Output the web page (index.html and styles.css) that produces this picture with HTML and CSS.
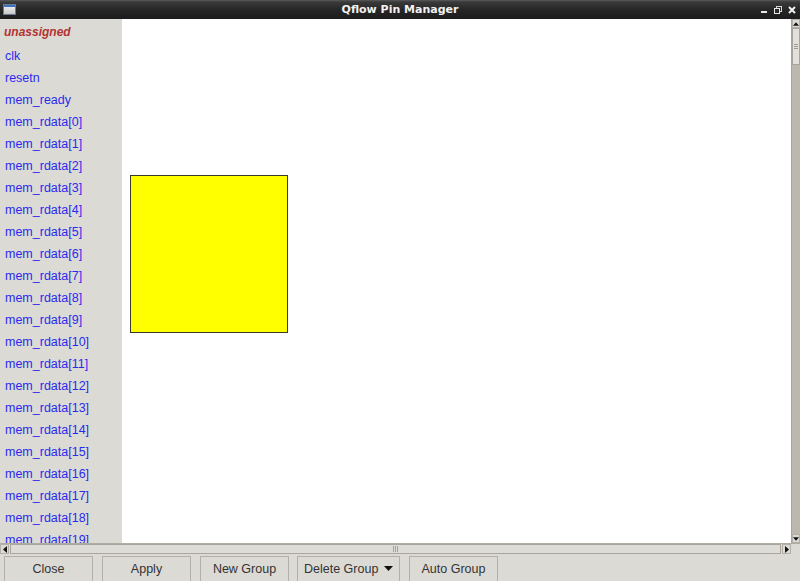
FILE: index.html
```html
<!DOCTYPE html>
<html>
<head>
<meta charset="utf-8">
<link rel="stylesheet" href="styles.css">
</head>
<body>
<div class="window">
  <div class="titlebar">
    <div class="appicon"><div class="appicon-top"></div></div>
    <div class="title">Qflow Pin Manager</div>
    <div class="wm-buttons">
      <svg width="8" height="8" viewBox="0 0 8 8"><rect x="1" y="5" width="6" height="2" fill="#e8e8e8"/></svg>
      <svg width="8" height="8" viewBox="0 0 8 8"><rect x="2.5" y="0.5" width="5" height="5" fill="none" stroke="#d8d8d8"/><rect x="0.5" y="2.5" width="5" height="5" fill="#2a2a2a" stroke="#e8e8e8"/></svg>
      <svg width="8" height="8" viewBox="0 0 8 8"><path d="M1 1 L7 7 M7 1 L1 7" stroke="#f0f0f0" stroke-width="2"/></svg>
    </div>
  </div>
  <div class="main">
    <div class="pinlist">
      <div class="pin group">unassigned</div>
      <div class="pin">clk</div>
      <div class="pin">resetn</div>
      <div class="pin">mem_ready</div>
      <div class="pin">mem_rdata[0]</div>
      <div class="pin">mem_rdata[1]</div>
      <div class="pin">mem_rdata[2]</div>
      <div class="pin">mem_rdata[3]</div>
      <div class="pin">mem_rdata[4]</div>
      <div class="pin">mem_rdata[5]</div>
      <div class="pin">mem_rdata[6]</div>
      <div class="pin">mem_rdata[7]</div>
      <div class="pin">mem_rdata[8]</div>
      <div class="pin">mem_rdata[9]</div>
      <div class="pin">mem_rdata[10]</div>
      <div class="pin">mem_rdata[11]</div>
      <div class="pin">mem_rdata[12]</div>
      <div class="pin">mem_rdata[13]</div>
      <div class="pin">mem_rdata[14]</div>
      <div class="pin">mem_rdata[15]</div>
      <div class="pin">mem_rdata[16]</div>
      <div class="pin">mem_rdata[17]</div>
      <div class="pin">mem_rdata[18]</div>
      <div class="pin">mem_rdata[19]</div>
    </div>
    <div class="canvas">
      <div class="chip"></div>
    </div>
    <div class="vscroll">
      <div class="arrow up"><svg width="7" height="4" viewBox="0 0 7 4"><path d="M0 4 L3.5 0 L7 4 Z" fill="#111"/></svg></div>
      <div class="vthumb"><div class="grip-h"></div><div class="grip-h"></div><div class="grip-h"></div></div>
      <div class="vtrough"></div>
      <div class="arrow down"><svg width="7" height="4" viewBox="0 0 7 4"><path d="M0 0 L3.5 4 L7 0 Z" fill="#111"/></svg></div>
    </div>
  </div>
  <div class="hrow">
    <div class="hscroll">
      <div class="harrow"><svg width="4" height="7" viewBox="0 0 4 7"><path d="M4 0 L0 3.5 L4 7 Z" fill="#111"/></svg></div>
      <div class="hthumb"><div class="grip-v"></div><div class="grip-v"></div><div class="grip-v"></div></div>
      <div class="harrow"><svg width="4" height="7" viewBox="0 0 4 7"><path d="M0 0 L4 3.5 L0 7 Z" fill="#111"/></svg></div>
    </div>
    <div class="corner"></div>
  </div>
  <div class="buttons">
    <div class="btn">Close</div>
    <div class="btn">Apply</div>
    <div class="btn">New Group</div>
    <div class="btn menubtn"><span>Delete Group</span><svg width="9" height="5" viewBox="0 0 9 5"><path d="M0 0 L9 0 L4.5 5 Z" fill="#111"/></svg></div>
    <div class="btn">Auto Group</div>
  </div>
</div>
</body>
</html>
```
FILE: styles.css
```css
html, body {
  margin: 0;
  padding: 0;
  background: #dcdad5;
}
.window {
  width: 800px;
  height: 581px;
  display: flex;
  flex-direction: column;
  overflow: hidden;
  font-family: "Liberation Sans", Arial, sans-serif;
}
.titlebar {
  height: 19px;
  flex: none;
  display: flex;
  align-items: center;
  background: linear-gradient(#5a5a5a 0px, #3a3a3a 2px, #262626 10px, #1c1c1c 19px);
}
.appicon {
  width: 13px;
  height: 11px;
  margin-left: 3px;
  background: linear-gradient(#f4f4f4, #c8c8c8);
  border: 1px solid #6a7a90;
  box-sizing: border-box;
}
.appicon-top {
  height: 2px;
  background: #3f6fc0;
}
.title {
  flex: 1;
  text-align: center;
  color: #f2f2f2;
  font-family: "DejaVu Sans", sans-serif;
  font-weight: bold;
  font-size: 11px;
  margin-right: -24px;
}
.wm-buttons {
  display: flex;
  gap: 6px;
  margin-right: 4px;
  align-items: center;
}
.main {
  height: 524px;
  flex: none;
  display: flex;
}
.pinlist {
  width: 122px;
  flex: none;
  background: #dcdad5;
  overflow: hidden;
  padding-top: 1px;
  box-sizing: border-box;
}
.pin {
  height: 22px;
  line-height: 22px;
  padding-left: 5px;
  font-size: 12.5px;
  color: #2a2aee;
  white-space: nowrap;
}
.pin.group {
  height: 25px;
  line-height: 24px;
  padding-left: 4px;
  font-size: 12px;
  font-weight: bold;
  font-style: italic;
  color: #b33333;
}
.canvas {
  flex: 1;
  background: #ffffff;
  padding: 156px 0 0 8px;
}
.chip {
  width: 158px;
  height: 158px;
  box-sizing: border-box;
  background: #ffff00;
  border: 1px solid #3a3a2a;
}
.vscroll {
  width: 9px;
  flex: none;
  display: flex;
  flex-direction: column;
  background: #bdb8ad;
  border-left: 1px solid #a8a49c;
  box-sizing: border-box;
}
.arrow {
  height: 9px;
  flex: none;
  display: flex;
  align-items: center;
  justify-content: center;
  background: #dcdad5;
  border: 1px solid #b4b0a8;
  box-sizing: border-box;
}
.vthumb {
  height: 37px;
  flex: none;
  background: #e2e0db;
  border: 1px solid #a8a49c;
  box-sizing: border-box;
  display: flex;
  flex-direction: column;
  justify-content: center;
  gap: 1px;
  padding: 0 1px;
}
.grip-h {
  height: 1px;
  background: #9e9a92;
}
.vtrough {
  flex: 1;
}
.hrow {
  height: 11px;
  flex: none;
  display: flex;
  border-top: 1px solid #b0aca4;
  box-sizing: border-box;
}
.hscroll {
  width: 791px;
  flex: none;
  display: flex;
  background: #dcdad5;
}
.harrow {
  width: 9px;
  flex: none;
  display: flex;
  align-items: center;
  justify-content: center;
  background: #dcdad5;
  border: 1px solid #b4b0a8;
  box-sizing: border-box;
}
.hthumb {
  flex: 1;
  margin: 0 1px;
  background: #dedcd7;
  border: 1px solid #aaa69e;
  box-sizing: border-box;
  display: flex;
  justify-content: center;
  align-items: stretch;
  gap: 1px;
  padding: 1px 0;
}
.grip-v {
  width: 1px;
  background: #a8a49c;
}
.corner {
  flex: 1;
  background: #dcdad5;
}
.buttons {
  flex: 1;
  display: flex;
  padding: 2px 0 0 4px;
}
.btn {
  width: 89px;
  height: 26px;
  margin-right: 9px;
  box-sizing: border-box;
  border: 1px solid #b4b0a8;
  border-bottom: none;
  padding-bottom: 2px;
  background: #dcdad5;
  color: #333;
  font-size: 12.5px;
  display: flex;
  align-items: center;
  justify-content: center;
}
.btn:nth-child(3) {
  margin-right: 8px;
}
.menubtn {
  width: 103px;
  justify-content: space-between;
  padding: 0 6px 2px 6px;
}
```
